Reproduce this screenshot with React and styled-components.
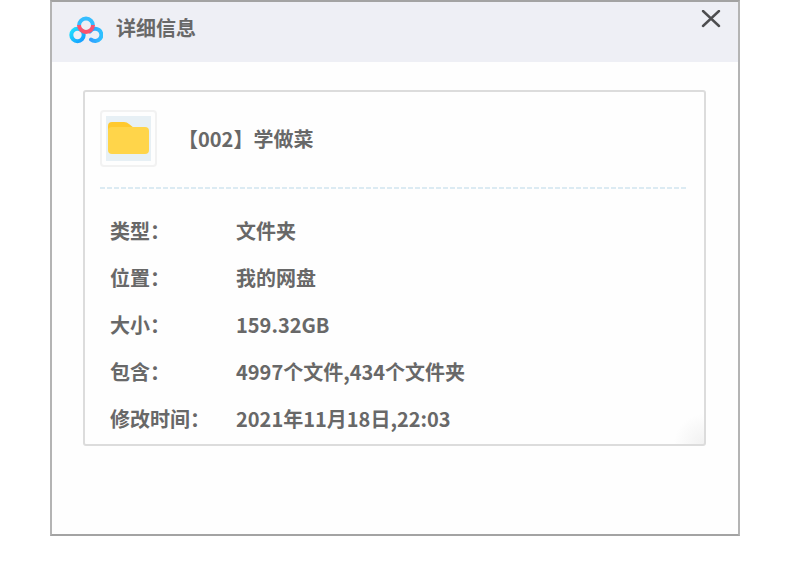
import React from 'react';
import styled, { createGlobalStyle } from 'styled-components';

const GlobalStyle = createGlobalStyle`
    body {
        margin: 0;
        background: #fff;
        color: #686868;
        font-family: "Noto Sans CJK SC", "Noto Sans", sans-serif;
        font-size: 20px;
        font-weight: 700;
        line-height: 28px;
    }
`;

const Dialog = styled.section`
    box-sizing: border-box;
    margin: 0 50px;
    padding-bottom: 88px;
    border: 2px solid #a3a3a3;
    border-color: #a3a3a3 #b4b4b4 #a3a3a3 #b4b4b4;
    background: #fefefe;
`;

const TitleBar = styled.header`
    display: flex;
    align-items: flex-start;
    box-sizing: border-box;
    height: 60px;
    padding: 8px 17px 0 17px;
    background: #eeeff5;
`;

const Logo = styled.svg`
    width: 34px;
    height: 28px;
    margin-top: 6px;
`;

const Title = styled.h1`
    flex: 1;
    margin: 4px 0 0 13px;
    font-size: 20px;
    font-weight: 700;
    line-height: 28px;
`;

const CloseButton = styled.button`
    display: flex;
    padding: 0;
    border: 0;
    background: none;
    cursor: pointer;
`;

const Card = styled.div`
    margin: 28px 32px 0 31px;
    border: 2px solid #dcdcdc;
    border-radius: 3px;
    background: radial-gradient(circle at 100% 100%, #f1f1f1, #fefefe 30px);
`;

const CardHead = styled.div`
    display: flex;
    align-items: center;
    margin: 0 17px 0 15px;
    padding: 18px 0 20px;
`;

const Divider = styled.hr`
    height: 2px;
    margin: 0 17px 0 15px;
    border: 0;
    background: repeating-linear-gradient(90deg, #dcebf3 0 5px, transparent 5px 7px);
`;

const Thumb = styled.div`
    display: flex;
    padding: 4px;
    border: 2px solid #f2f2f2;
    border-radius: 4px;
`;

const FileName = styled.h2`
    margin: 0 0 0 21px;
    font-size: 20px;
    font-weight: 700;
    line-height: 28px;
`;

const Details = styled.dl`
    margin: 0;
    padding: 18px 0 2px 25px;
`;

const DetailRow = styled.div`
    display: grid;
    grid-template-columns: 126px 1fr;
    align-items: center;
    height: 47px;
`;

const Label = styled.dt`
    white-space: nowrap;
`;

const Value = styled.dd`
    margin: 0;
`;

const details = [
    { label: '类型：', value: '文件夹' },
    { label: '位置：', value: '我的网盘' },
    { label: '大小：', value: '159.32GB' },
    { label: '包含：', value: '4997个文件,434个文件夹' },
    { label: '修改时间：', value: '2021年11月18日,22:03' },
];

function CloudLogo() {
    return (
        <Logo viewBox="0 0 34 28" fill="none" strokeWidth="4" aria-hidden="true">
            <defs>
                <linearGradient id="leftRing" x1="0" y1="0" x2="1" y2="1">
                    <stop offset="0" stopColor="#1fe0ff" />
                    <stop offset="1" stopColor="#159bff" />
                </linearGradient>
                <linearGradient id="rightHook" x1="0" y1="0" x2="1" y2="0">
                    <stop offset="0" stopColor="#2f9dff" />
                    <stop offset="1" stopColor="#2fc0ff" />
                </linearGradient>
            </defs>
            <circle cx="8.500" cy="19" r="6.200" stroke="url(#leftRing)" />
            <path d="M22 23.500a6.200 6.200 0 1 0-1-8" stroke="url(#rightHook)" strokeLinecap="round" />
            <path d="M10 9.500a7 7 0 0 1 14 0" stroke="#35bdff" />
            <path d="M10 9a7 7 0 0 0 14 0" stroke="#f9536f" />
        </Logo>
    );
}

function FolderIcon() {
    return (
        <svg width="45" height="45" viewBox="0 0 45 45" aria-hidden="true">
            <path fill="#e7f0f5" d="M0 0h45v45H0z" />
            <path fill="#ffc92e" d="M2 10q0-4 4-4h12q3 0 5 2l5 4v8H2z" />
            <rect x="2" y="11" width="41" height="27" rx="4" fill="#ffd54a" />
        </svg>
    );
}

function App() {
    return (
        <>
            <GlobalStyle />
            <Dialog role="dialog" aria-labelledby="title">
                <TitleBar>
                    <CloudLogo />
                    <Title id="title">详细信息</Title>
                    <CloseButton type="button" aria-label="关闭">
                        <svg width="20" height="18" viewBox="0 0 20 18" stroke="#4d4d4f" strokeWidth="2.400" strokeLinecap="round">
                            <path d="m2 1 16 15M18 1 2 16" />
                        </svg>
                    </CloseButton>
                </TitleBar>
                <Card>
                    <CardHead>
                        <Thumb>
                            <FolderIcon />
                        </Thumb>
                        <FileName>【002】学做菜</FileName>
                    </CardHead>
                    <Divider />
                    <Details>
                        {details.map(({ label, value }) => (
                            <DetailRow key={label}>
                                <Label>{label}</Label>
                                <Value>{value}</Value>
                            </DetailRow>
                        ))}
                    </Details>
                </Card>
            </Dialog>
        </>
    );
}

export default App;
